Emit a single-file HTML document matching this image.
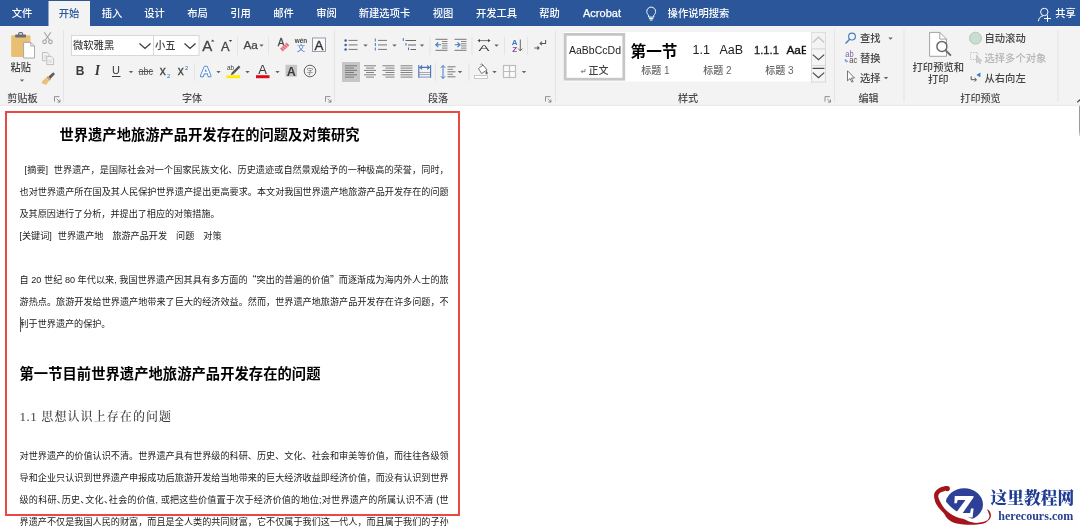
<!DOCTYPE html>
<html lang="zh-CN">
<head>
<meta charset="utf-8">
<title>Word</title>
<style>
html,body{margin:0;padding:0;}
body{width:1080px;height:527px;overflow:hidden;background:#fff;position:relative;font-family:"Liberation Sans","Noto Sans CJK SC",sans-serif;}
#ribbon{will-change:transform;font-weight:500;position:absolute;left:0;top:0;width:1080px;height:108px;display:block;}
#ribbon text{font-family:"Liberation Sans","Noto Sans CJK SC",sans-serif;}
#doc{will-change:transform;position:absolute;left:0;top:108px;width:1080px;height:419px;}
.redbox{position:absolute;left:5px;top:3px;width:451px;height:401px;border:2px solid #ec4843;}
.ln{position:absolute;left:19.5px;width:429.2px;height:22px;line-height:22px;font-size:9.1px;color:#1a1a1a;white-space:nowrap;text-align:justify;text-align-last:justify;}
.ln.nj{text-align:left;text-align-last:left;}
.title{position:absolute;left:59.5px;top:16px;width:300px;height:22px;line-height:22px;font-size:14.28px;font-weight:bold;color:#000;white-space:nowrap;text-align-last:justify;}
.h1{position:absolute;left:19.5px;top:255px;width:301px;height:22px;line-height:22px;font-size:14.3px;font-weight:bold;color:#000;white-space:nowrap;text-align-last:justify;}
.h2{position:absolute;left:19.5px;top:298px;height:22px;line-height:22px;font-size:12px;font-weight:500;color:#3c3c3c;white-space:nowrap;font-family:"Liberation Serif","Noto Serif CJK SC",serif;letter-spacing:1.08px;}
.cursor{position:absolute;left:20px;top:209px;width:1px;height:15px;background:#555;}
.hp{margin-right:-4.4px;}
.gp{display:inline-block;height:1px;}
.ql{margin-left:5px;font-size:11.5px;line-height:1;}
.qr{margin-right:5px;font-size:11.5px;line-height:1;}
#wm{will-change:transform;position:absolute;left:920px;top:470px;width:160px;height:57px;}
</style>
</head>
<body>
<svg id="ribbon" viewBox="0 0 1080 108">
<rect x="0" y="0" width="1080" height="108" fill="#f3f3f3"/>
<rect x="0" y="0" width="1080" height="26" fill="#2b579a"/>
<rect x="48.5" y="1" width="41.5" height="26" fill="#f3f3f3"/>
<rect x="0" y="104.8" width="1080" height="1.2" fill="#ebebeb"/>
<rect x="0" y="106" width="1080" height="2" fill="#fff"/>
<g id="tabs" font-size="10.3" fill="#fff" text-anchor="middle">
<text x="22" y="17">文件</text>
<text x="69" y="17" fill="#2b579a">开始</text>
<text x="112" y="17">插入</text>
<text x="154.5" y="17">设计</text>
<text x="197.5" y="17">布局</text>
<text x="240.5" y="17">引用</text>
<text x="283.5" y="17">邮件</text>
<text x="326.5" y="17">审阅</text>
<text x="384.5" y="17">新建选项卡</text>
<text x="443" y="17">视图</text>
<text x="496.5" y="17">开发工具</text>
<text x="549.5" y="17">帮助</text>
<text x="602" y="17" font-size="11" stroke="#fff" stroke-width="0.25">Acrobat</text>
<text x="698.5" y="17">操作说明搜索</text>
<text x="1065.5" y="17">共享</text>
</g>
<g fill="none" stroke="#fff" stroke-width="1">
<path d="M648.6,15.2c-1.2,-1.1 -1.8,-2.3 -1.8,-3.7a4.4,4.4 0 0 1 8.8,0c0,1.4 -0.6,2.6 -1.8,3.7v1.9h-5.2z"/>
<path d="M649,18.6h4.4M649.8,20h2.8"/>
<circle cx="1044.3" cy="12" r="3.7"/>
<path d="M1038.4,21.2c0.3,-3 2,-4.8 4.6,-5.3"/>
<path d="M1044,18.5h7M1047.5,15.2v6.6"/>
</g>
<g id="clip">
<rect x="11.2" y="35.2" width="19.2" height="21.8" rx="1" fill="#e9bf72"/>
<rect x="15.2" y="34.6" width="10.8" height="2.8" rx="0.6" fill="#6c6c74"/>
<rect x="18.7" y="32.6" width="3.9" height="3" rx="1" fill="none" stroke="#6c6c74" stroke-width="1.1"/>
<path d="M23.6,42.4h7.2l3.7,3.7v11.9h-10.9z" fill="#fff" stroke="#a3a3a3" stroke-width="0.9"/>
<path d="M30.8,42.4v3.7h3.7" fill="none" stroke="#a3a3a3" stroke-width="0.9"/>
</g>
<text x="20.8" y="70.6" font-size="10.2" fill="#444" text-anchor="middle">粘贴</text>
<path d="M19.8,79.4h4.4l-2.2,2.4z" fill="#636363"/>
<g fill="none" stroke="#a3a3a3" stroke-width="1.1">
<path d="M44.2,32.2l5.6,8M50.8,32.2l-5.6,8"/>
<circle cx="44.6" cy="41.8" r="1.8"/><circle cx="50.4" cy="41.8" r="1.8"/>
</g>
<g fill="#f3f3f3" stroke="#b9b9b9" stroke-width="0.9">
<path d="M42.5,52.5h4.6l2.2,2.2v6h-6.8z"/>
<path d="M46.8,56.4h4.6l2.2,2.2v6h-6.8z"/>
<path d="M44,56h3M44,58h2M48.4,60.2h3.4M48.4,62.2h3.4" stroke-width="0.6"/>
</g>
<g>
<path d="M53.2,72.2l1.8,1.8l-4.6,5l-2.2,-2.2z" fill="#5f5f5f"/>
<path d="M47.6,76.2l3.2,3.2l-1.3,1.4l-3.2,-3.2z" fill="#c99a4e"/>
<path d="M46,77.8l3.3,3.3l-3.6,3.8l-4.2,-1.8l1.2,-2.6z" fill="#e9c27a"/>
</g>
<text x="22.5" y="101.9" font-size="10.1" fill="#4a4a4a" text-anchor="middle">剪贴板</text>
<path d="M54.5,101.6v-5h5" fill="none" stroke="#777" stroke-width="0.8"/><path d="M56.7,98.8l3.3,3.3m0,-2.6v2.6h-2.6" fill="none" stroke="#777" stroke-width="0.8"/>
<rect x="63.0" y="30" width="1" height="72" fill="#e4e4e4"/>
<rect x="71.5" y="35.5" width="82" height="20" fill="#fff" stroke="#d8d8d8"/>
<rect x="153.5" y="35.5" width="45.5" height="20" fill="#fff" stroke="#d8d8d8"/>
<text x="73" y="48.8" font-size="10.3" fill="#444">微软雅黑</text>
<text x="155" y="48.8" font-size="10.3" fill="#444">小五</text>
<path d="M139.5,43.5l5.5,5l5.5,-5M184.5,43.5l5.5,5l5.5,-5" fill="none" stroke="#3c3c3c" stroke-width="1.25"/>
<text x="202.3" y="50.6" font-size="15" fill="#444" stroke="#444" stroke-width="0.3">A</text><path d="M211,41.6l1.7,-2l1.7,2z" fill="#444"/>
<text x="221" y="50.6" font-size="12.8" fill="#444" stroke="#444" stroke-width="0.3">A</text><path d="M228.8,40l1.7,2l1.7,-2z" fill="#444"/>
<rect x="237.0" y="37" width="1" height="18" fill="#e4e4e4"/>
<text x="243.5" y="48.8" font-size="11.8" fill="#444" stroke="#444" stroke-width="0.25">Aa</text>
<path d="M259.3,44.4h4.4l-2.2,2.4z" fill="#636363"/>
<rect x="268.0" y="37" width="1" height="18" fill="#e4e4e4"/>
<text x="277.8" y="45.8" font-size="10" fill="#444" stroke="#444" stroke-width="0.3">A</text>
<g transform="rotate(-42 284.7 47)"><rect x="280.2" y="45.1" width="9" height="3.8" fill="#e8707e"/><path d="M282.4,45.1v3.8M284.7,45.1v3.8M287,45.1v3.8" stroke="#f6cdd2" stroke-width="0.7"/></g>
<text x="301" y="43.3" font-size="6.4" font-weight="bold" fill="#444" text-anchor="middle">wén</text>
<text x="301" y="51.4" font-size="8.2" font-weight="400" fill="#3f7cc4" text-anchor="middle">文</text>
<rect x="312.5" y="38" width="13" height="13.5" fill="#fbfbfb" stroke="#8893a6" stroke-width="0.9"/>
<text x="319" y="49.8" font-size="13.4" fill="#333" stroke="#333" stroke-width="0.35" text-anchor="middle">A</text>
<text x="80" y="75.4" font-size="12" font-weight="bold" fill="#3a3a3a" text-anchor="middle">B</text>
<text x="97.4" y="75.4" font-size="13.6" font-style="italic" font-weight="bold" fill="#3a3a3a" text-anchor="middle" style="font-family:Liberation Serif,serif">I</text>
<text x="116" y="74.2" font-size="11" fill="#3a3a3a" text-anchor="middle">U</text><rect x="112" y="76" width="8.5" height="1" fill="#3a3a3a"/>
<path d="M128.8,70.9h4.4l-2.2,2.4z" fill="#636363"/>
<text x="138.6" y="75.2" font-size="10.8" fill="#555" textLength="14.4" lengthAdjust="spacingAndGlyphs">abc</text><rect x="138.5" y="71" width="14.6" height="1" fill="#555"/>
<text x="159.8" y="75" font-size="12" fill="#444" stroke="#444" stroke-width="0.3">x</text><text x="167" y="77.6" font-size="5.8" fill="#2f6fb7">2</text>
<text x="177.8" y="75" font-size="12" fill="#444" stroke="#444" stroke-width="0.3">x</text><text x="185" y="69.6" font-size="5.8" fill="#2f6fb7">2</text>
<rect x="194.0" y="63" width="1" height="18" fill="#e4e4e4"/>
<text x="205.8" y="75.8" font-size="13.5" fill="#4a86d4" stroke="#4a86d4" stroke-width="2.6" stroke-linejoin="round" text-anchor="middle">A</text><text x="205.8" y="75.8" font-size="13.5" fill="#fff" stroke="#fff" stroke-width="0.7" stroke-linejoin="round" text-anchor="middle">A</text>
<path d="M216.3,70.9h4.4l-2.2,2.4z" fill="#636363"/>
<text x="230.6" y="69.8" font-size="6.4" fill="#444" text-anchor="middle">ab</text>
<path d="M238.8,65.6l1.6,1.6l-7,7l-2.6,1l1,-2.6z" fill="#555"/>
<rect x="226.5" y="75.2" width="13.5" height="3" fill="#ffed00"/>
<path d="M245.3,70.9h4.4l-2.2,2.4z" fill="#636363"/>
<text x="262.7" y="74.3" font-size="13" fill="#3a3a3a" text-anchor="middle">A</text>
<rect x="256" y="75.2" width="13.5" height="3" fill="#e0091b"/>
<path d="M275.3,70.9h4.4l-2.2,2.4z" fill="#636363"/>
<rect x="285.5" y="64.8" width="11.5" height="11.8" fill="#c6c6c6"/>
<text x="291.3" y="75.8" font-size="12.5" font-weight="bold" fill="#3a3a3a" text-anchor="middle">A</text>
<circle cx="310" cy="71" r="5.8" fill="none" stroke="#555" stroke-width="0.9"/><text x="310" y="73.6" font-size="6.8" font-weight="400" fill="#666" text-anchor="middle">字</text>
<text x="192" y="101.9" font-size="10.1" fill="#4a4a4a" text-anchor="middle">字体</text>
<path d="M325.5,101.6v-5h5" fill="none" stroke="#777" stroke-width="0.8"/><path d="M327.7,98.8l3.3,3.3m0,-2.6v2.6h-2.6" fill="none" stroke="#777" stroke-width="0.8"/>
<rect x="334.0" y="30" width="1" height="72" fill="#e4e4e4"/>
<circle cx="345.6" cy="40.5" r="1.25" fill="#3a5fa8"/><circle cx="345.6" cy="45" r="1.25" fill="#3a5fa8"/><circle cx="345.6" cy="49.5" r="1.25" fill="#3a5fa8"/><rect x="348.5" y="39.9" width="9" height="1" fill="#777"/><rect x="348.5" y="44.4" width="9" height="1" fill="#777"/><rect x="348.5" y="48.9" width="9" height="1" fill="#777"/>
<path d="M363.3,44.4h4.4l-2.2,2.4z" fill="#636363"/>
<rect x="374.8" y="38.5" width="1" height="3" fill="#3b78c4"/><rect x="374.8" y="43" width="1" height="3" fill="#3b78c4"/><rect x="374.8" y="47.5" width="1" height="3" fill="#3b78c4"/><rect x="378" y="39.9" width="9" height="1" fill="#777"/><rect x="378" y="44.4" width="9" height="1" fill="#777"/><rect x="378" y="48.9" width="9" height="1" fill="#777"/>
<path d="M392.3,44.4h4.4l-2.2,2.4z" fill="#636363"/>
<rect x="402.8" y="38" width="1" height="3" fill="#3b78c4"/><rect x="405.5" y="43" width="1" height="2.6" fill="#3b78c4"/><rect x="408" y="47.5" width="1" height="2.6" fill="#3b78c4"/><rect x="405.5" y="40" width="10.5" height="1" fill="#666"/><rect x="408" y="44.5" width="8" height="1" fill="#666"/><rect x="410.5" y="49" width="5.5" height="1" fill="#666"/>
<path d="M419.8,44.4h4.4l-2.2,2.4z" fill="#636363"/>
<rect x="429.5" y="37" width="1" height="18" fill="#e4e4e4"/>
<rect x="435.5" y="38.8" width="12" height="1" fill="#777"/><rect x="435.5" y="49.8" width="12" height="1" fill="#777"/><rect x="442" y="41" width="5.5" height="1" fill="#888"/><rect x="442" y="43.2" width="5.5" height="1" fill="#888"/><rect x="442" y="45.4" width="5.5" height="1" fill="#888"/><rect x="442" y="47.6" width="5.5" height="1" fill="#888"/>
<path d="M441,44.8h-5M438.3,42.4l-2.5,2.4l2.5,2.4" fill="none" stroke="#3b78c4" stroke-width="1.1"/>
<rect x="454.5" y="38.8" width="12" height="1" fill="#777"/><rect x="454.5" y="49.8" width="12" height="1" fill="#777"/><rect x="461" y="41" width="5.5" height="1" fill="#888"/><rect x="461" y="43.2" width="5.5" height="1" fill="#888"/><rect x="461" y="45.4" width="5.5" height="1" fill="#888"/><rect x="461" y="47.6" width="5.5" height="1" fill="#888"/>
<path d="M454.8,44.8h5M457.5,42.4l2.5,2.4l-2.5,2.4" fill="none" stroke="#3b78c4" stroke-width="1.1"/>
<rect x="471.5" y="37" width="1" height="18" fill="#e4e4e4"/>
<text x="0" y="50.6" font-size="9.4" fill="#333" text-anchor="middle" transform="translate(484 0) scale(1.75 1)">A</text>
<path d="M479.5,40.6h9" fill="none" stroke="#555" stroke-width="0.8"/><path d="M477.4,40.6l2.6,-1.7v3.4zM490.6,40.6l-2.6,-1.7v3.4z" fill="#444"/>
<path d="M494.3,44.4h4.4l-2.2,2.4z" fill="#636363"/>
<rect x="504.0" y="37" width="1" height="18" fill="#e4e4e4"/>
<text x="514.7" y="44.8" font-size="8" font-weight="bold" fill="#3b78c4" text-anchor="middle">A</text><text x="514.7" y="51.6" font-size="8" font-weight="bold" fill="#8a3ea8" text-anchor="middle">Z</text>
<path d="M520.3,39.5v11.3M518.2,48.6l2.1,2.3l2.1,-2.3" fill="none" stroke="#666" stroke-width="1"/>
<rect x="527.0" y="37" width="1" height="18" fill="#e4e4e4"/>
<path d="M545.6,40v3.4h-5.4M541.9,41.7l-1.8,1.7l1.8,1.7M534.4,48h4.6M537.4,46.4l1.7,1.6l-1.7,1.6" fill="none" stroke="#5a5a5a" stroke-width="1.05"/>
<rect x="342" y="62" width="18" height="20" fill="#c6c6c6"/>
<rect x="345" y="65.4" width="12" height="0.85" fill="#6e6e6e"/><rect x="345" y="67.65" width="9" height="0.85" fill="#6e6e6e"/><rect x="345" y="69.9" width="12" height="0.85" fill="#6e6e6e"/><rect x="345" y="72.15" width="9" height="0.85" fill="#6e6e6e"/><rect x="345" y="74.4" width="12" height="0.85" fill="#6e6e6e"/><rect x="345" y="76.65" width="9" height="0.85" fill="#6e6e6e"/>
<rect x="364" y="65.4" width="12" height="0.85" fill="#6e6e6e"/><rect x="366" y="67.65" width="8" height="0.85" fill="#6e6e6e"/><rect x="364" y="69.9" width="12" height="0.85" fill="#6e6e6e"/><rect x="366" y="72.15" width="8" height="0.85" fill="#6e6e6e"/><rect x="364" y="74.4" width="12" height="0.85" fill="#6e6e6e"/><rect x="366" y="76.65" width="8" height="0.85" fill="#6e6e6e"/>
<rect x="382.5" y="65.4" width="12" height="0.85" fill="#6e6e6e"/><rect x="385.5" y="67.65" width="9" height="0.85" fill="#6e6e6e"/><rect x="382.5" y="69.9" width="12" height="0.85" fill="#6e6e6e"/><rect x="385.5" y="72.15" width="9" height="0.85" fill="#6e6e6e"/><rect x="382.5" y="74.4" width="12" height="0.85" fill="#6e6e6e"/><rect x="385.5" y="76.65" width="9" height="0.85" fill="#6e6e6e"/>
<rect x="400.5" y="65.4" width="12" height="0.85" fill="#6e6e6e"/><rect x="400.5" y="67.65" width="12" height="0.85" fill="#6e6e6e"/><rect x="400.5" y="69.9" width="12" height="0.85" fill="#6e6e6e"/><rect x="400.5" y="72.15" width="12" height="0.85" fill="#6e6e6e"/><rect x="400.5" y="74.4" width="12" height="0.85" fill="#6e6e6e"/><rect x="400.5" y="76.65" width="12" height="0.85" fill="#6e6e6e"/>
<rect x="419" y="72" width="11.5" height="0.85" fill="#8e9db5"/><rect x="419" y="74.2" width="11.5" height="0.85" fill="#8e9db5"/><rect x="419" y="76.6" width="11.5" height="0.95" fill="#7f90ac"/>
<path d="M418.8,65v12.8M430.6,65v12.8M420.2,67.4h9M422.2,65.4l-2.2,2l2.2,2M427.2,65.4l2.2,2l-2.2,2" fill="none" stroke="#4a72b0" stroke-width="1.1"/>
<rect x="435.0" y="63" width="1" height="18" fill="#e4e4e4"/>
<path d="M443,65.5v13M440.8,67.8l2.2,-2.3l2.2,2.3M440.8,76.2l2.2,2.3l2.2,-2.3" fill="none" stroke="#4472c4" stroke-width="0.95"/><rect x="447.5" y="66.3" width="8" height="1" fill="#777"/><rect x="447.5" y="71.3" width="8" height="1" fill="#777"/><rect x="447.5" y="76.3" width="8" height="1" fill="#777"/><rect x="447.5" y="68.8" width="5.5" height="1" fill="#888"/><rect x="447.5" y="73.8" width="5.5" height="1" fill="#888"/>
<path d="M457.8,70.9h4.4l-2.2,2.4z" fill="#636363"/>
<rect x="468.5" y="63" width="1" height="18" fill="#e4e4e4"/>
<path d="M478.5,68.5l4.5,-3.5l4,5l-5.5,3.5z" fill="#fff" stroke="#666" stroke-width="0.9"/><path d="M486.5,70.5q1.8,2.4 0.9,3.4q-1,0.8 -1.8,-0.2q-0.5,-1.2 0.9,-3.2z" fill="#666"/><path d="M480.5,64.5q1.5,-1.5 2.5,0.5" fill="none" stroke="#666" stroke-width="0.8"/>
<rect x="474.5" y="75.5" width="13" height="3" fill="#fff" stroke="#bdbdbd" stroke-width="0.8"/>
<path d="M492.3,70.9h4.4l-2.2,2.4z" fill="#636363"/>
<rect x="503.5" y="65.5" width="12" height="12" fill="#fafafa" stroke="#bdbdbd" stroke-width="1.2"/><path d="M509.5,65.5v12M503.5,71.5h12" stroke="#bdbdbd" stroke-width="1.2"/>
<path d="M521.8,70.9h4.4l-2.2,2.4z" fill="#636363"/>
<text x="438" y="101.9" font-size="10.1" fill="#4a4a4a" text-anchor="middle">段落</text>
<path d="M545.5,101.6v-5h5" fill="none" stroke="#777" stroke-width="0.8"/><path d="M547.7,98.8l3.3,3.3m0,-2.6v2.6h-2.6" fill="none" stroke="#777" stroke-width="0.8"/>
<rect x="555.0" y="30" width="1" height="72" fill="#e4e4e4"/>
<rect x="564" y="32" width="247" height="49.5" fill="#fff"/>
<rect x="565.2" y="34.4" width="58.6" height="44.8" fill="#fff" stroke="#c6c6c6" stroke-width="2.8"/>
<text x="569" y="54" font-size="11.2" fill="#222" textLength="52" lengthAdjust="spacingAndGlyphs">AaBbCcDd</text>
<path d="M585,69v2.6h-3.6M582.6,70.2l-1.4,1.4l1.4,1.4" fill="none" stroke="#666" stroke-width="0.8"/>
<text x="598.5" y="74" font-size="10" fill="#444" text-anchor="middle">正文</text>
<text x="654" y="57" font-size="15.6" font-weight="bold" fill="#000" text-anchor="middle">第一节</text>
<text x="655.5" y="74" font-size="10" fill="#666" text-anchor="middle">标题 1</text>
<text x="692.5" y="54.3" font-size="12.5" fill="#222">1.1</text><text x="719.5" y="54.3" font-size="12.5" fill="#222">AaB</text>
<text x="717.5" y="74" font-size="10" fill="#666" text-anchor="middle">标题 2</text>
<text x="754" y="54.3" font-size="11.2" fill="#222" stroke="#222" stroke-width="0.3">1.1.1</text><text x="786.5" y="54.3" font-size="11.8" fill="#111" stroke="#111" stroke-width="0.35">AaE</text>
<rect x="806" y="44" width="5" height="12" fill="#fff"/>
<text x="779.5" y="74" font-size="10" fill="#666" text-anchor="middle">标题 3</text>
<rect x="811.5" y="32.5" width="14" height="16.5" fill="#f3f3f3" stroke="#dedede"/><rect x="811.5" y="49" width="14" height="16.5" fill="#f5f5f5" stroke="#d8d8d8"/><rect x="811.5" y="65.5" width="14" height="16.5" fill="#f5f5f5" stroke="#d8d8d8"/>
<path d="M812.8,42.4l5.7,-5.2l5.7,5.2" fill="none" stroke="#c6c6c6" stroke-width="1.3"/><path d="M812.8,54.6l5.7,5.2l5.7,-5.2M812.8,72.6l5.7,5.2l5.7,-5.2M812.6,68.3h11.8" fill="none" stroke="#4a4a4a" stroke-width="1.2"/>
<text x="688" y="101.9" font-size="10.1" fill="#4a4a4a" text-anchor="middle">样式</text>
<path d="M825,101.6v-5h5" fill="none" stroke="#777" stroke-width="0.8"/><path d="M827.2,98.8l3.3,3.3m0,-2.6v2.6h-2.6" fill="none" stroke="#777" stroke-width="0.8"/>
<rect x="834.0" y="30" width="1" height="72" fill="#e4e4e4"/>
<circle cx="852" cy="36.6" r="3.4" fill="none" stroke="#4a7dc0" stroke-width="1.15"/><path d="M849.6,39.2l-4,4.2" stroke="#4a7dc0" stroke-width="1.4"/>
<text x="860" y="42" font-size="10.3" fill="#444">查找</text>
<path d="M888.3,37.4h4.4l-2.2,2.4z" fill="#636363"/>
<text x="845.2" y="57.2" font-size="8.4" font-weight="400" fill="#7f62a6" textLength="8.4" lengthAdjust="spacingAndGlyphs">ab</text><text x="849.2" y="62.8" font-size="8.4" font-weight="400" fill="#4a4a4a" textLength="8" lengthAdjust="spacingAndGlyphs">ac</text><path d="M845.3,59v2.2h2M846.4,60l1.2,1.2l-1.2,1.2" fill="none" stroke="#4a7dc0" stroke-width="0.8"/>
<text x="860" y="62" font-size="10.3" fill="#444">替换</text>
<path d="M847.5,70.8v10l2.5,-2.3l1.8,3.6l1.3,-0.6l-1.8,-3.5h3.2z" fill="#fff" stroke="#555" stroke-width="0.8"/>
<text x="860" y="81.5" font-size="10.3" fill="#444">选择</text>
<path d="M883.8,76.9h4.4l-2.2,2.4z" fill="#636363"/>
<text x="868.5" y="101.9" font-size="10.1" fill="#4a4a4a" text-anchor="middle">编辑</text>
<rect x="903.5" y="30" width="1" height="72" fill="#e4e4e4"/>
<path d="M929.6,32.4h10.2l6.7,6.7v17.2h-16.9z" fill="#fff" stroke="#999" stroke-width="0.9"/><path d="M939.8,32.4v6.7h6.7" fill="none" stroke="#999" stroke-width="0.9"/>
<circle cx="941.9" cy="46.4" r="5" fill="#fff" stroke="#6a6a6a" stroke-width="1.5"/><path d="M945.6,50.4l5.3,5.2" stroke="#6a6a6a" stroke-width="2"/>
<text x="938.3" y="70.8" font-size="10.3" fill="#444" text-anchor="middle">打印预览和</text>
<text x="938.3" y="83.3" font-size="10.3" fill="#444" text-anchor="middle">打印</text>
<circle cx="975.5" cy="38.2" r="6" fill="#c9ddd2" stroke="#a9c0b3" stroke-width="0.8"/>
<text x="984.5" y="42" font-size="10.3" fill="#444">自动滚动</text>
<path d="M970.5,52.5h7v7h-7z" fill="none" stroke="#c4c4c4" stroke-width="1" stroke-dasharray="1.5 1"/><path d="M976.5,55.5v7.5l1.9,-1.7l1.3,2.5l1,-0.5l-1.3,-2.4h2.4z" fill="#d0d0d0" stroke="#b5b5b5" stroke-width="0.6"/>
<text x="984.5" y="62" font-size="10.3" fill="#b4b4b4">选择多个对象</text>
<path d="M971.2,76.3v3.4h5M974.6,77.8l1.9,1.9l-1.9,1.9" fill="none" stroke="#555" stroke-width="1"/><path d="M980.4,72.6v4.6l-4,-2.3z" fill="#3a78b4"/>
<text x="984.5" y="81.8" font-size="10.3" fill="#444">从右向左</text>
<text x="980.5" y="101.9" font-size="10.1" fill="#4a4a4a" text-anchor="middle">打印预览</text>
<rect x="1057.5" y="30" width="1" height="72" fill="#e4e4e4"/>
<path d="M1077.2,102.4l2.3,-2.3l2.3,2.3" fill="none" stroke="#444" stroke-width="1.1"/>
</svg>
<div id="doc">
<div class="redbox"></div>
<div style="position:absolute;left:1078.8px;top:-2px;width:1.2px;height:30px;background:linear-gradient(#9a9a9a,#9a9a9a 80%,#d8d8d8)"></div>
<div class="title">世界遗产地旅游产品开发存在的问题及对策研究</div>
<div class="ln" style="top:50.5px;left:24.6px;width:424.1px">[摘要]<span class="gp" style="width:5.6px"></span>世界遗产，是国际社会对一个国家民族文化、历史遗迹或自然景观给予的一种极高的荣誉，同时，</div>
<div class="ln" style="top:72.5px">也对世界遗产所在国及其人民保护世界遗产提出更高要求。本文对我国世界遗产地旅游产品开发存在的问题</div>
<div class="ln nj" style="top:95px">及其原因进行了分析，并提出了相应的对策措施。</div>
<div class="ln nj" style="top:116.5px">[关键词]<span class="gp" style="width:6px"></span>世界遗产地　旅游产品开发　问题　对策</div>
<div class="ln" style="top:161.4px">自 20 世纪 80 年代以来, 我国世界遗产因其具有多方面的<span class="ql">“</span>突出的普遍的价值<span class="qr">”</span>而逐渐成为海内外人士的旅</div>
<div class="ln" style="top:183.2px">游热点。旅游开发给世界遗产地带来了巨大的经济效益。然而，世界遗产地旅游产品开发存在许多问题，不</div>
<div class="ln nj" style="top:205.4px">利于世界遗产的保护。</div>
<div class="cursor"></div>
<div class="h1">第一节目前世界遗产地旅游产品开发存在的问题</div>
<div class="h2"><span style="font-weight:400;font-size:13px;letter-spacing:0.5px;color:#444">1.1</span> 思想认识上存在的问题</div>
<div class="ln" style="top:337px">对世界遗产的价值认识不清。世界遗产具有世界级的科研、历史、文化、社会和审美等价值，而往往各级领</div>
<div class="ln" style="top:359px">导和企业只认识到世界遗产申报成功后旅游开发给当地带来的巨大经济收益即经济价值，而没有认识到世界</div>
<div class="ln" style="top:381.3px">级的科研<span class="hp">、</span>历史<span class="hp">、</span>文化<span class="hp">、</span>社会的价值, 或把这些价值置于次于经济价值的地位;对世界遗产的所属认识不清 (世</div>
<div class="ln" style="top:403px">界遗产不仅是我国人民的财富，而且是全人类的共同财富，它不仅属于我们这一代人，而且属于我们的子孙</div>
</div>
<svg id="wm" viewBox="920 470 160 57">
<ellipse cx="964.2" cy="504.4" rx="18.8" ry="16.2" fill="#2e3f97"/>
<path d="M954.8,496h18.7v1.5l-10.8,15.5h7.4l0.9,-4.4h2.6l-1,8.9h-19l0.2,-1.8l11.7,-15.7h-7.8l-0.9,3.2h-2.5z" fill="#fff"/>
<path d="M944.6,499.5c3,4.6 6.4,8 10.4,10.8c3.6,2.6 7.4,4.8 11.6,6.4c3.8,1.5 7.6,2.6 11.6,3.4l8,3.5h-48l-8,-24z" fill="#fff"/>
<path d="M947.2,486.1C946.6,485.5 943.1,486.5 941.4,487.1C939.7,487.8 938.1,488.6 936.9,489.8C935.7,491.0 934.4,492.4 934.1,494.3C933.8,496.2 934.4,499.2 935.1,501.4C935.9,503.7 937.3,505.7 938.7,507.7C940.1,509.6 942.1,511.1 943.6,513.0C945.2,515.0 945.9,517.5 948.1,519.3C950.2,521.0 952.8,522.6 956.6,523.6C960.4,524.5 966.4,524.8 970.9,524.8C975.3,524.8 980.2,524.5 983.4,523.6C986.5,522.6 988.3,520.7 989.6,519.3C990.9,517.8 990.9,516.2 990.9,514.8C990.9,513.5 990.2,512.2 989.6,511.2C989.0,510.3 987.3,509.0 987.1,509.3C987.0,509.6 988.3,512.0 988.7,513.2C989.1,514.4 989.7,515.4 989.4,516.6C989.2,517.8 988.5,519.3 987.4,520.2C986.2,521.1 984.3,521.5 982.5,522.0C980.6,522.4 978.3,522.9 976.2,522.9C974.1,522.8 972.0,522.4 970.0,521.8C967.9,521.2 966.2,520.0 963.7,519.1C961.2,518.2 957.8,517.7 954.8,516.2C951.8,514.6 948.3,512.4 945.9,509.9C943.4,507.5 941.3,503.7 940.1,501.4C938.8,499.1 938.2,497.6 938.3,496.1C938.3,494.6 939.4,493.4 940.5,492.5C941.6,491.6 943.8,491.8 945.0,490.7C946.1,489.6 947.8,486.7 947.2,486.1z" fill="#a3151a"/>
<circle cx="947.2" cy="488.6" r="2.7" fill="#a3151a"/>
<text x="990.5" y="503.6" font-size="16.6" font-weight="900" fill="#1f3c93" font-family="'Liberation Serif','Noto Serif CJK SC',serif" textLength="83.6" lengthAdjust="spacingAndGlyphs">这里教程网</text>
<text x="998.3" y="519.6" font-size="12.2" font-weight="bold" fill="#27408f" font-family="'Liberation Serif',serif" textLength="75" lengthAdjust="spacingAndGlyphs">herecours.com</text>
</svg>
</body>
</html>
